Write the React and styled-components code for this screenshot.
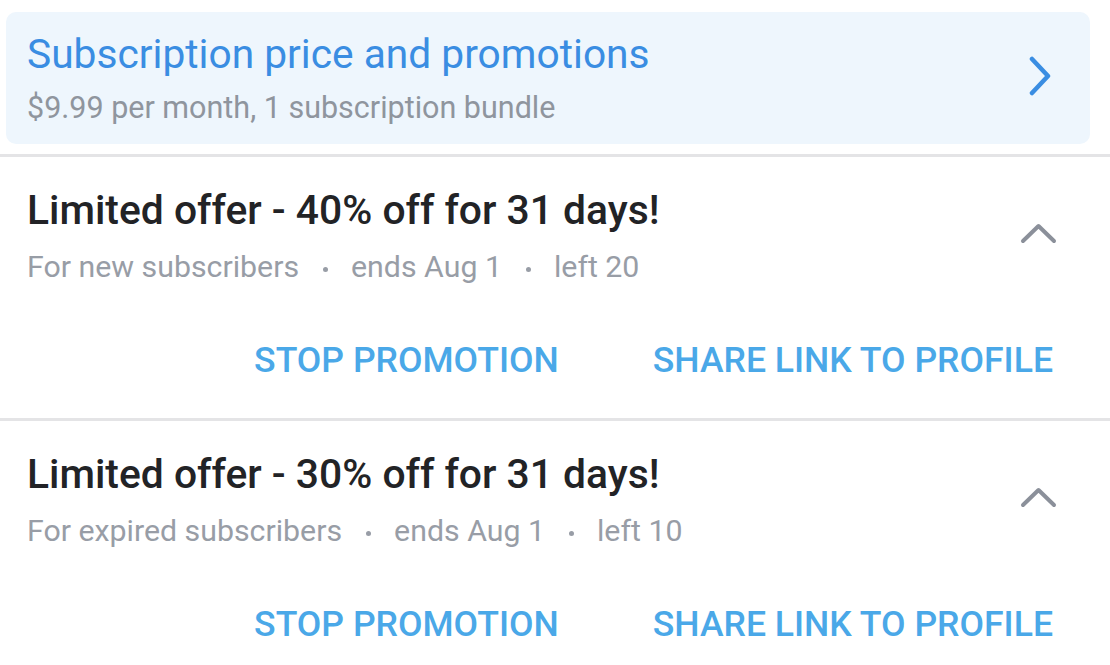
import React from 'react';
import styled, { createGlobalStyle } from 'styled-components';

const GlobalStyle = createGlobalStyle`
  body {
    margin: 0;
    background: #ffffff;
    font-family: Roboto, "Noto Sans", "Liberation Sans", sans-serif;
  }
`;

const offers = [
  { id: 1, title: 'Limited offer - 40% off for 31 days!', audience: 'For new subscribers', ends: 'ends Aug 1', left: 'left 20' },
  { id: 2, title: 'Limited offer - 30% off for 31 days!', audience: 'For expired subscribers', ends: 'ends Aug 1', left: 'left 10' },
];

const ChevronRight = () => (
  <svg width='26' height='40' viewBox='0 0 26 40' fill='none'>
    <path d='M5 3 L21 20 L5 37' stroke='#3a8de2' strokeWidth='4.5' strokeLinecap='round' strokeLinejoin='round' />
  </svg>
);

const ChevronUp = () => (
  <svg width='40' height='24' viewBox='0 0 40 24' fill='none'>
    <path d='M4 20 L19.5 5 L35 20' stroke='#8b909a' strokeWidth='4' strokeLinecap='round' strokeLinejoin='round' />
  </svg>
);

const App = () => {
  return (
    <Page>
      <GlobalStyle />
      <PriceCard>
        <CardText>
          <CardTitle>Subscription price and promotions</CardTitle>
          <CardSub>$9.99 per month, 1 subscription bundle</CardSub>
        </CardText>
        <IconBox>
          <ChevronRight />
        </IconBox>
      </PriceCard>
      {offers.map((offer) => (
        <Offer key={offer.id}>
          <OfferHead>
            <div>
              <OfferTitle>{offer.title}</OfferTitle>
              <Meta>
                <span>{offer.audience}</span>
                <Dot />
                <span>{offer.ends}</span>
                <Dot />
                <span>{offer.left}</span>
              </Meta>
            </div>
            <IconBox $up>
              <ChevronUp />
            </IconBox>
          </OfferHead>
          <Actions>
            <ActionButton>Stop promotion</ActionButton>
            <ActionButton>Share link to profile</ActionButton>
          </Actions>
        </Offer>
      ))}
    </Page>
  );
};

const Page = styled.div`
  width: 1110px;
  height: 665px;
  overflow: hidden;
  padding-top: 12px;
  box-sizing: border-box;
`;

const PriceCard = styled.div`
  display: flex;
  align-items: center;
  justify-content: space-between;
  margin: 0 20px 0 6px;
  padding: 18px 37px 18px 21px;
  background: #eef6fd;
  border-radius: 10px;
  box-sizing: border-box;
`;

const CardText = styled.div`
  display: flex;
  flex-direction: column;
  gap: 12px;
`;

const CardTitle = styled.div`
  font-size: 40.7px;
  line-height: 48px;
  color: #3a8de2;
`;

const CardSub = styled.div`
  font-size: 30.5px;
  line-height: 36px;
  color: #8f959e;
`;

const IconBox = styled.div`
  display: flex;
  align-items: center;
  justify-content: center;
  margin-right: ${(p) => (p.$up ? '51px' : '0')};
  margin-bottom: ${(p) => (p.$up ? '6px' : '0')};
  margin-top: ${(p) => (p.$up ? '0' : '-4px')};
`;

const Offer = styled.section`
  border-top: 3px solid #e4e4e6;
  margin-top: 10px;
  padding: 29px 0 0 27px;
  height: 264px;
  box-sizing: border-box;
  & + & {
    margin-top: 0;
  }
`;

const OfferHead = styled.div`
  display: flex;
  align-items: center;
  justify-content: space-between;
`;

const OfferTitle = styled.div`
  font-size: 40.8px;
  line-height: 48px;
  font-weight: 500;
  color: #222326;
`;

const Meta = styled.div`
  display: flex;
  align-items: center;
  margin-top: 15px;
  font-size: 30.3px;
  line-height: 36px;
  color: #989da6;
`;

const Dot = styled.span`
  width: 5px;
  height: 5px;
  border-radius: 50%;
  background: #989da6;
  margin: 4px 23px 0 24px;
`;

const Actions = styled.div`
  display: flex;
  justify-content: flex-end;
  gap: 94px;
  padding-right: 57px;
  margin-top: 54px;
`;

const ActionButton = styled.button`
  border: none;
  background: transparent;
  padding: 0;
  font-family: Roboto, "Noto Sans", sans-serif;
  font-size: 35.6px;
  line-height: 42px;
  font-weight: 500;
  text-transform: uppercase;
  color: #4aa8e8;
  cursor: pointer;
`;

export default App;
